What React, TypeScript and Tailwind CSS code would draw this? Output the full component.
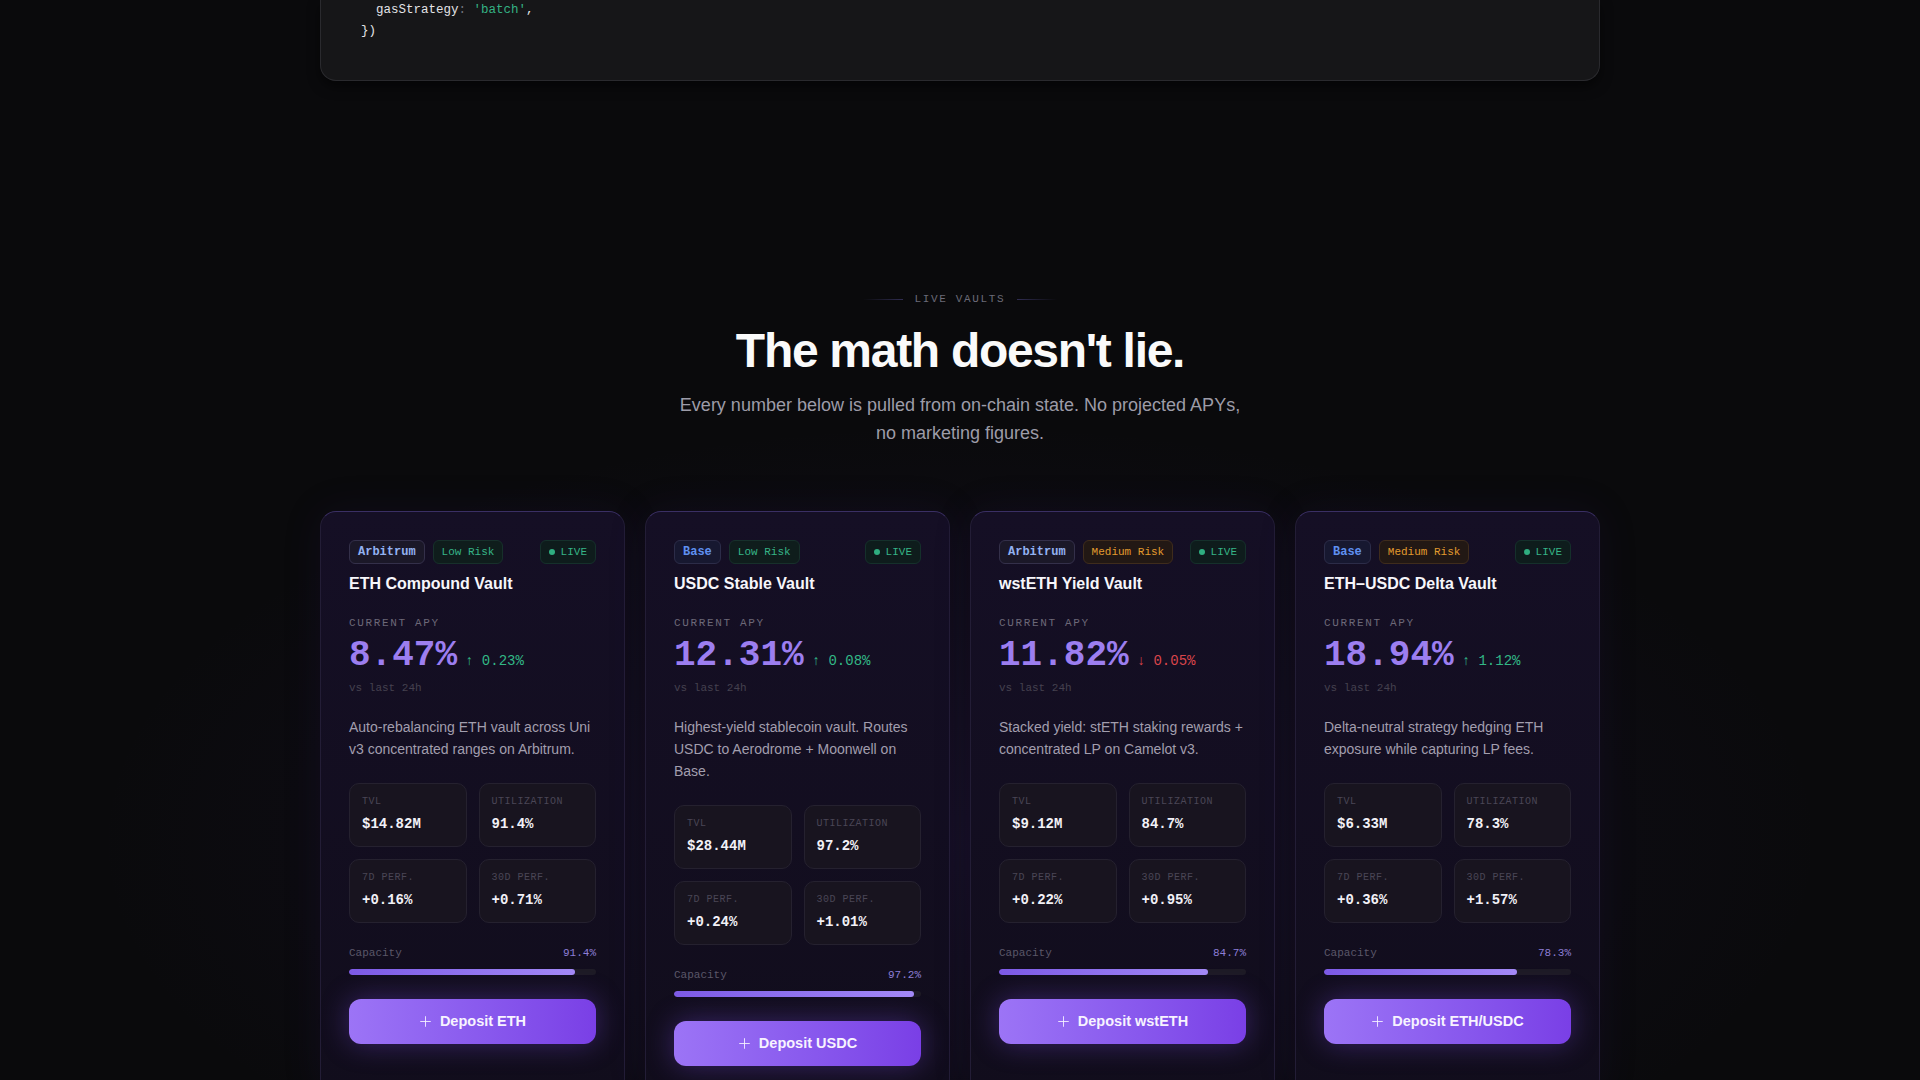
import React from "react";

type Vault = {
  chain: "Arbitrum" | "Base";
  risk: "Low Risk" | "Medium Risk";
  name: string;
  apy: string;
  change: string;
  up: boolean;
  desc: string;
  tvl: string;
  util: string;
  d7: string;
  d30: string;
  cap: number;
  asset: string;
};

const vaults: Vault[] = [
  {
    chain: "Arbitrum",
    risk: "Low Risk",
    name: "ETH Compound Vault",
    apy: "8.47%",
    change: "0.23%",
    up: true,
    desc: "Auto-rebalancing ETH vault across Uni v3 concentrated ranges on Arbitrum.",
    tvl: "$14.82M",
    util: "91.4%",
    d7: "+0.16%",
    d30: "+0.71%",
    cap: 91.4,
    asset: "ETH",
  },
  {
    chain: "Base",
    risk: "Low Risk",
    name: "USDC Stable Vault",
    apy: "12.31%",
    change: "0.08%",
    up: true,
    desc: "Highest-yield stablecoin vault. Routes USDC to Aerodrome + Moonwell on Base.",
    tvl: "$28.44M",
    util: "97.2%",
    d7: "+0.24%",
    d30: "+1.01%",
    cap: 97.2,
    asset: "USDC",
  },
  {
    chain: "Arbitrum",
    risk: "Medium Risk",
    name: "wstETH Yield Vault",
    apy: "11.82%",
    change: "0.05%",
    up: false,
    desc: "Stacked yield: stETH staking rewards + concentrated LP on Camelot v3.",
    tvl: "$9.12M",
    util: "84.7%",
    d7: "+0.22%",
    d30: "+0.95%",
    cap: 84.7,
    asset: "wstETH",
  },
  {
    chain: "Base",
    risk: "Medium Risk",
    name: "ETH\u2013USDC Delta Vault",
    apy: "18.94%",
    change: "1.12%",
    up: true,
    desc: "Delta-neutral strategy hedging ETH exposure while capturing LP fees.",
    tvl: "$6.33M",
    util: "78.3%",
    d7: "+0.36%",
    d30: "+1.57%",
    cap: 78.3,
    asset: "ETH/USDC",
  },
];

function Stat({ label, value }: { label: string; value: string }) {
  return (
    <div className="rounded-[10px] border border-[#25212f] bg-[#18141f] p-3">
      <div className="font-['Liberation_Mono',monospace] text-[10px] leading-3 tracking-[0.05em] text-[#4a4656]">
        {label}
      </div>
      <div className="mt-1.5 font-['Liberation_Mono',monospace] text-[14px] font-bold leading-5 text-[#f2f1f7]">
        {value}
      </div>
    </div>
  );
}

function PlusIcon() {
  return (
    <svg width="13" height="13" viewBox="0 0 24 24" fill="none" stroke="currentColor" strokeWidth="1.6" strokeLinecap="round">
      <path d="M12 3v18M3 12h18" />
    </svg>
  );
}

function VaultCard({ v }: { v: Vault }) {
  const chainCls =
    v.chain === "Arbitrum"
      ? "text-[#93b2f2] border-[#34304a] bg-[#1b1828]"
      : "text-[#5f90f0] border-[#2c2c48] bg-[#171830]";
  const riskCls =
    v.risk === "Low Risk"
      ? "text-[#36b487] border-[#17302b] bg-[#0f1d1c]"
      : "text-[#e39b2e] border-[#3f2c1c] bg-[#221814]";
  return (
    <div className="flex flex-col rounded-2xl border border-[#231d36] border-t-[#3a2f64] bg-gradient-to-b from-[#150f25] to-[#110d1c] p-7 shadow-[0_0_40px_rgba(60,30,120,0.12)]">
      <div className="flex items-center justify-between">
        <div className="flex items-center gap-2">
          <span className={`rounded-md border px-2 py-[3px] font-['Liberation_Mono',monospace] text-[12px] font-bold leading-4 ${chainCls}`}>
            {v.chain}
          </span>
          <span className={`rounded-md border px-2 py-[3px] font-['Liberation_Mono',monospace] text-[11px] leading-4 ${riskCls}`}>
            {v.risk}
          </span>
        </div>
        <span className="flex items-center gap-1.5 rounded-md border border-[#15302b] bg-[#0e1c1c] px-2 py-[3px] font-['Liberation_Mono',monospace] text-[11px] leading-4 text-[#36b487]">
          <span className="h-1.5 w-1.5 rounded-full bg-[#2fae80]" />
          LIVE
        </span>
      </div>
      <h3 className="mt-2 text-[16px] font-bold leading-6 text-[#f7f6fb]">{v.name}</h3>
      <div className="mt-[19px] font-['Liberation_Mono',monospace] text-[11px] leading-4 tracking-[0.15em] text-[#6c6878]">
        CURRENT APY
      </div>
      <div className="mt-[7px] flex items-baseline gap-2">
        <span className="font-['Liberation_Mono',monospace] text-[36px] font-bold leading-none text-[#9c7ef0]">
          {v.apy}
        </span>
        <span
          className={`font-['Liberation_Mono',monospace] text-[14px] leading-none ${
            v.up ? "text-[#32b786]" : "text-[#d9454b]"
          }`}
        >
          {v.up ? "\u2191" : "\u2193"} {v.change}
        </span>
      </div>
      <div className="mt-1.5 font-['Liberation_Mono',monospace] text-[11px] leading-4 text-[#45414f]">vs last 24h</div>
      <p className="mt-5 text-[14px] leading-[22px] text-[#a29eae]">{v.desc}</p>
      <div className="mt-[23px] grid grid-cols-2 gap-3">
        <Stat label="TVL" value={v.tvl} />
        <Stat label="UTILIZATION" value={v.util} />
        <Stat label="7D PERF." value={v.d7} />
        <Stat label="30D PERF." value={v.d30} />
      </div>
      <div className="mt-[22px] flex items-center justify-between font-['Liberation_Mono',monospace] text-[11px] leading-4">
        <span className="text-[#5b5769]">Capacity</span>
        <span className="text-[#8d7ed6]">{v.cap.toFixed(1)}%</span>
      </div>
      <div className="mt-2 h-1.5 w-full overflow-hidden rounded-full bg-[#1e1b26]">
        <div
          className="h-full rounded-full bg-gradient-to-r from-[#7d5ae6] to-[#a48af7]"
          style={{ width: `${v.cap}%` }}
        />
      </div>
      <button className="mt-6 flex h-[45px] w-full items-center justify-center gap-2 rounded-xl bg-gradient-to-r from-[#9c74f6] to-[#7a3fe6] text-[14.5px] font-bold text-[#f7f3ff] shadow-[0_0_28px_rgba(130,80,240,0.35)]">
        <PlusIcon />
        Deposit {v.asset}
      </button>
    </div>
  );
}

export default function App() {
  return (
    <div className="min-h-screen overflow-hidden bg-[#0a0a0c] font-['Liberation_Sans',Arial,sans-serif] text-white">
      <div className="mx-auto w-[1280px]">
        <div className="rounded-b-2xl border-x border-b border-[#2a2a2e] bg-[#161618] pb-[38px] pl-10 font-['Liberation_Mono',monospace] text-[12.5px] leading-[21px] shadow-[0_6px_12px_rgba(0,0,0,0.5)]">
          <div className="pl-[15px]">
            <span className="text-[#e4e4e7]">gasStrategy</span>
            <span className="text-[#71717a]">: </span>
            <span className="text-[#34b183]">'batch'</span>
            <span className="text-[#e4e4e7]">,</span>
          </div>
          <div className="text-[#e4e4e7]">{"})"}</div>
        </div>
      </div>

      <section className="bg-[radial-gradient(ellipse_60%_55%_at_50%_75%,rgba(70,40,140,0.14),transparent_75%)] pt-[210px]">
        <div className="mx-auto w-[1280px]">
          <div className="flex items-center justify-center gap-3">
            <span className="h-px w-10 bg-gradient-to-r from-transparent to-[#302d52]" />
            <span className="font-['Liberation_Mono',monospace] text-[11px] leading-4 tracking-[0.15em] text-[#6b6a78]">
              LIVE VAULTS
            </span>
            <span className="h-px w-10 bg-gradient-to-l from-transparent to-[#302d52]" />
          </div>
          <h2 className="mt-5 text-center text-[48px] font-bold leading-none tracking-[-0.027em] text-[#fafafa]">
            The math doesn't lie.
          </h2>
          <p className="mx-auto mt-4 max-w-[580px] text-center text-[18px] leading-7 text-[#9d9ca8]">
            Every number below is pulled from on-chain state. No projected APYs, no marketing figures.
          </p>
          <div className="mt-16 grid grid-cols-4 gap-5">
            {vaults.map((v) => (
              <VaultCard key={v.name} v={v} />
            ))}
          </div>
        </div>
      </section>
    </div>
  );
}
